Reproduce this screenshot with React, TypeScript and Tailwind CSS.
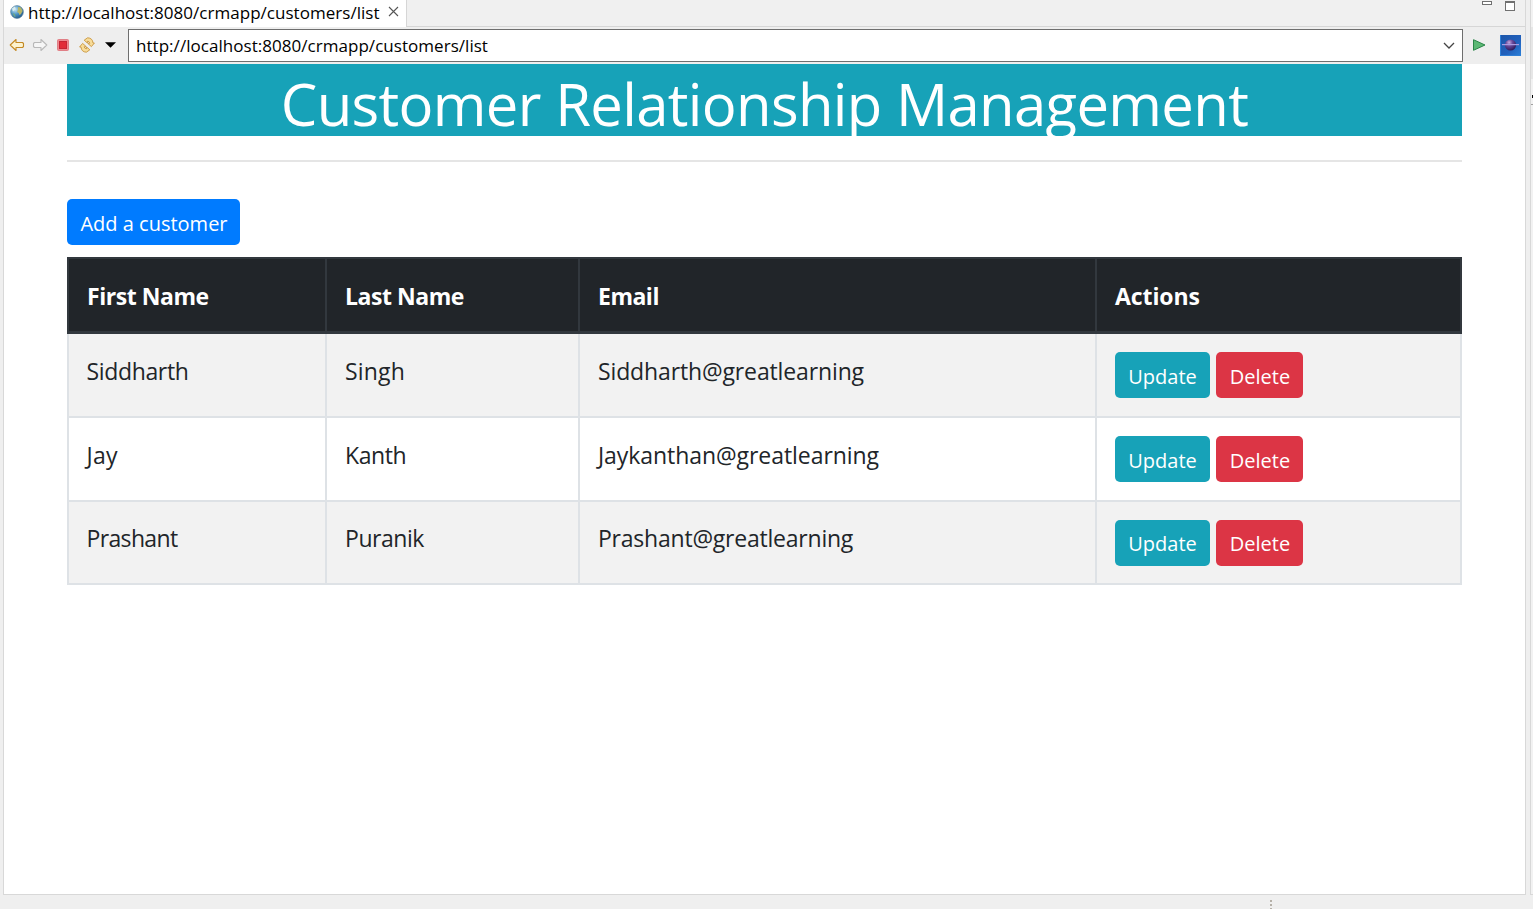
import React from "react";

const ROWS = [
  ["Siddharth", "Singh", "Siddharth@greatlearning"],
  ["Jay", "Kanth", "Jaykanthan@greatlearning"],
  ["Prashant", "Puranik", "Prashant@greatlearning"],
];

const SPACING = [
  ["tracking-[-0.35px]", "tracking-[0.2px]", "tracking-[-0.13px]"],
  ["tracking-[0.3px]", "tracking-[-0.4px]", "tracking-[-0.06px]"],
  ["tracking-[-0.65px]", "tracking-[-0.45px]", "tracking-[-0.22px]"],
];

function Arrow({ flip, stroke, fill }: { flip?: boolean; stroke: string; fill: string }) {
  return (
    <svg width="16" height="16" viewBox="0 0 16 16" className={flip ? "-scale-x-100" : ""}>
      <path d="M1.2 8 L7 2.5 V5.5 H13.5 L14.5 6.5 V9.5 L13.5 10.5 H7 V13.5 Z" fill={fill} stroke={stroke} strokeWidth="1.1" strokeLinejoin="round" />
    </svg>
  );
}

function Globe() {
  return (
    <svg width="14" height="14" viewBox="0 0 14 14">
      <defs>
        <radialGradient id="globe" cx="0.35" cy="0.3" r="0.8">
          <stop offset="0" stopColor="#c9e6f5" />
          <stop offset="0.5" stopColor="#4b93c4" />
          <stop offset="1" stopColor="#1b4f83" />
        </radialGradient>
      </defs>
      <circle cx="7" cy="7" r="6.4" fill="url(#globe)" stroke="#5a7d96" strokeWidth="0.6" />
      <path d="M8 2 L11 2.5 L12.6 6 L11 9 L9.5 10 L8.6 8 L7 6.5 L8 5 Z" fill="#b5b568" />
      <path d="M2 3.5 L5 1.5 L5.5 4 L3 6.5 Z" fill="#d8edf0" />
      <path d="M2.5 8 L5 9 L5.5 12 L4 11.5 Z" fill="#6fa588" />
    </svg>
  );
}

function Refresh() {
  return (
    <svg width="16" height="16" viewBox="0 0 16 16" fill="#f7dc9a" stroke="#c9953c" strokeWidth="0.9" strokeLinejoin="round">
      <path d="M5.2 3.2 L8.6 0.8 Q13.6 1 14 6 L15.4 6 L12.4 9.6 L8.8 6.4 L10.8 6.2 Q10.5 4.4 8.4 4.2 L8.4 6 Z" />
      <path d="M10.8 12.8 L7.4 15.2 Q2.4 15 2 10 L0.6 10 L3.6 6.4 L7.2 9.6 L5.2 9.8 Q5.5 11.6 7.6 11.8 L7.6 10 Z" />
    </svg>
  );
}

function Eclipse() {
  return (
    <svg width="21" height="21" viewBox="0 0 21 21">
      <defs>
        <linearGradient id="sky" x1="0" y1="0" x2="1" y2="1">
          <stop offset="0" stopColor="#1c55a8" />
          <stop offset="0.6" stopColor="#2161bd" />
          <stop offset="1" stopColor="#2b80d8" />
        </linearGradient>
        <radialGradient id="orb" cx="0.38" cy="0.28" r="0.75">
          <stop offset="0" stopColor="#c3abe0" />
          <stop offset="0.4" stopColor="#6a4a9c" />
          <stop offset="1" stopColor="#2b1655" />
        </radialGradient>
      </defs>
      <rect width="21" height="21" fill="url(#sky)" />
      <path d="M0.5 0 V20.5 H21" fill="none" stroke="#2f7fd6" />
      <circle cx="10.5" cy="10" r="5.6" fill="url(#orb)" />
      <path d="M2 9.6 H19" stroke="#a99be0" strokeWidth="1.2" />
    </svg>
  );
}

function Toolbar() {
  return (
    <div className="flex h-[37px] items-center bg-[#eeeeee] pb-px">
      <div className="flex w-[124px] items-center pl-[5px]">
        <Arrow stroke="#c48a25" fill="#fdf3cf" />
        <span className="ml-[7px] flex"><Arrow flip stroke="#b9b9b9" fill="#f6f6f6" /></span>
        <svg className="ml-[9px]" width="12" height="12" viewBox="0 0 12 12">
          <rect x="0.5" y="0.5" width="11" height="11" rx="1" fill="#ee8a90" stroke="#e07f86" />
          <rect x="2.5" y="2.5" width="7" height="7" fill="#e22c38" stroke="#c62433" />
        </svg>
        <span className="ml-[10px] flex"><Refresh /></span>
        <svg className="ml-[10px]" width="11" height="6" viewBox="0 0 12 6"><path d="M0 0 H12 L6 6 Z" fill="#000" /></svg>
      </div>
      <div className="mt-px flex h-[33px] w-[1335px] items-center justify-between border border-[#6e6e6e] bg-white pl-[7px] pr-[7px]">
        <span className="whitespace-nowrap text-[17px] leading-6 text-black tracking-[0.04px]">http://localhost:8080/crmapp/customers/list</span>
        <svg width="12" height="8" viewBox="0 0 12 8"><path d="M1 1 L6 6 L11 1" fill="none" stroke="#444" strokeWidth="1.3" /></svg>
      </div>
      <svg className="ml-[10px]" width="13" height="12" viewBox="0 0 13 12">
        <path d="M0.5 0.7 V11.3 L12 6 Z" fill="#5cb874" stroke="#2a8548" />
      </svg>
      <span className="ml-[14px] flex"><Eclipse /></span>
    </div>
  );
}

function TabBar() {
  return (
    <div className="flex h-[27px]">
      <div className="flex h-[27px] w-[402px] shrink-0 items-center bg-white pb-[2px] pl-[6px]">
        <span className="mb-[2px] flex"><Globe /></span>
        <span className="ml-[4px] w-[360px] whitespace-nowrap text-[17px] leading-6 text-black tracking-[0.03px]">http://localhost:8080/crmapp/customers/list</span>
        <svg className="mb-[2px]" width="11" height="11" viewBox="0 0 11 11"><path d="M1 1 L10 10 M10 1 L1 10" stroke="#555" strokeWidth="1.1" /></svg>
      </div>
      <div className="flex flex-1 justify-end border-b border-l border-[#d6d6d6] bg-[#f0f0f0]">
        <div className="mt-px mr-[13px] h-[4px] w-[10px] border border-[#707070] bg-white" />
        <div className="mt-px mr-[10px] h-[10px] w-[10px] border border-t-2 border-[#707070] bg-white" />
      </div>
    </div>
  );
}

function SidePanel() {
  return (
    <div className="ml-[4px] flex flex-1 flex-col border-b border-l border-[#d8d8d8] bg-[#f2f2f2]">
      <div className="mt-[27px] h-[52px] bg-[#e6e6e6]" />
      <div className="mt-[16px] ml-px h-[3px] bg-black" />
      <div className="mt-[6px] h-px bg-[#a0a0a0]" />
    </div>
  );
}

const COLS = "grid grid-cols-[258px_253px_517px_363px]";

export default function App() {
  return (
    <div className="flex h-[909px] w-[1533px] flex-col overflow-hidden bg-[#efefef] font-['Open_Sans','Noto_Sans',sans-serif]">
      <div className="flex h-[895px] shrink-0">
        <div className="w-[1523px] border-x border-b border-[#d8d8d8] bg-white ml-[3px]">
          <TabBar />
          <Toolbar />
          <main className="ml-[63px] w-[1395px]">
            <h1 className="flex h-[72px] items-center justify-center whitespace-nowrap bg-[#17a2b8] pt-[7px] text-[58px] leading-[72px] tracking-[-0.66px] text-white">
              Customer Relationship Management
            </h1>
            <hr className="mt-6 border-0 border-t-2 border-[#e5e5e5]" />
            <button className="mt-[37px] flex h-[46px] w-[173px] items-center justify-center rounded-[5px] bg-[#007bff] pt-[3px] pl-px whitespace-nowrap text-[20px] text-white">
              Add a customer
            </button>
            <div className="mt-3 border-2 border-b-[3px] border-[#32383e] bg-[#212529] text-white">
              <div className={COLS + " h-[72px] divide-x-2 divide-[#32383e] text-[23px] leading-[36px] font-bold"}>
                <div className="pl-[18px] pt-[19px] tracking-[-0.45px]">First Name</div>
                <div className="pl-[18px] pt-[19px] tracking-[-0.45px]">Last Name</div>
                <div className="pl-[18px] pt-[19px] tracking-[-0.5px]">Email</div>
                <div className="pl-[18px] pt-[19px] tracking-[-0.1px]">Actions</div>
              </div>
            </div>
            <div className="divide-y-2 divide-[#dee2e6] border-x-2 border-b-2 border-[#dee2e6] text-[#212529]">
              {ROWS.map((row, i) => (
                <div key={row[0]} className={COLS + " divide-x-2 divide-[#dee2e6] text-[23px] leading-[36px] " + (i % 2 === 0 ? "bg-[#f2f2f2] " : "bg-white ") + (i === 2 ? "h-[81px]" : "h-[84px]")}>
                  {row.map((cell, j) => (
                    <div key={cell} className={"whitespace-nowrap " + (i === 2 ? "pt-[18px] " : "pt-[19px] ") + (j === 0 ? "pl-[17.5px] " : "pl-[18px] ") + SPACING[i][j]}>{cell}</div>
                  ))}
                  <div className="flex gap-[6px] pl-[18px] pt-[18px] text-[20px] text-white">
                    <button className={"flex h-[46px] w-[95px] items-center justify-center rounded-[5px] bg-[#17a2b8] " + (i === 2 ? "pt-px" : "pt-[3px]")}>Update</button>
                    <button className={"flex h-[46px] w-[87px] items-center justify-center rounded-[5px] bg-[#dc3545] pl-px " + (i === 2 ? "pt-px" : "pt-[3px]")}>Delete</button>
                  </div>
                </div>
              ))}
            </div>
          </main>
        </div>
        <SidePanel />
      </div>
      <div className="ml-[1270px] mt-[5px] flex shrink-0 flex-col gap-[2px]">
        <i className="size-[2px] bg-[#b5b0a8]" />
        <i className="size-[2px] bg-[#b5b0a8]" />
        <i className="size-[2px] bg-[#b5b0a8]" />
      </div>
    </div>
  );
}
